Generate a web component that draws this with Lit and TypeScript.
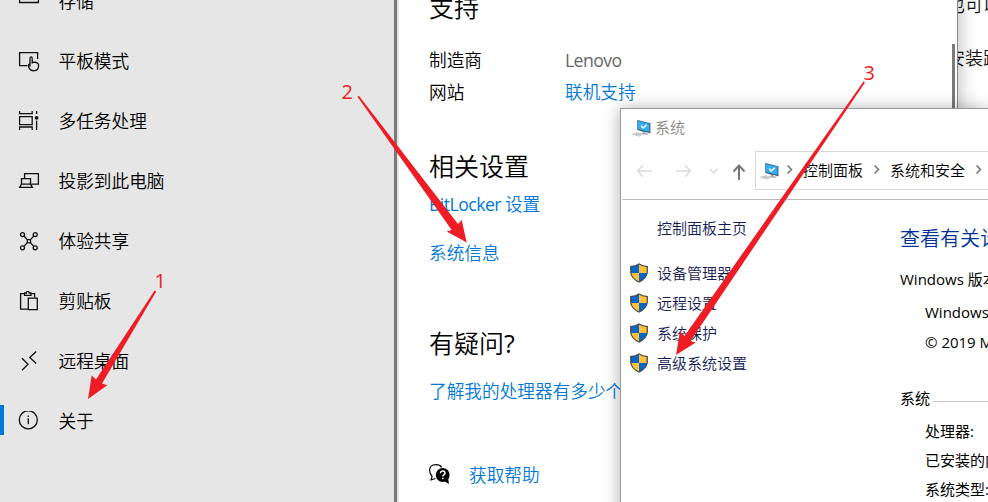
import { LitElement, html, css, svg } from "lit";
import { customElement } from "lit/decorators.js";

const line = (body: unknown) => html`<svg class="ico" width="22" height="22" viewBox="0 0 22 22" fill="none" stroke="#111" stroke-width="1.3">${body}</svg>`;

const icons = {
  storage: line(svg`<path d="M1.600 4.500h18.800v7H1.600zM14 8h2"/>`),
  tablet: line(svg`<path d="M9.500 14.600H1.600V1.600h18v6.500"/><path d="M12 15.500V7.400q0-1.500 1.100-1.500t1.100 1.500v5.100M14.200 11q3.200 0 5.500 1.200.9.600.9 2.600 0 5-4.800 5-3.700 0-5-3.200l-.3-2.600q.4-1.200 1.500-.6"/>`),
  tasks: line(svg`<path d="M1.600 0v2.700h12.600V0M1.600 5.600h12.600v8H1.600zM1.600 19v-3h12.600v3M18.600 0v3M18.600 9.500V19"/><circle cx="18.600" cy="6.800" r="1.900" fill="#111" stroke="none"/>`),
  project: line(svg`<path d="M6.600 7V2.600h13.800v10.500h-7M3.500 13.200V7.600h9v5.600M3.500 13.200l-1.900 3.200h12.800l-1.900-3.200z"/>`),
  share: line(svg`<circle cx="4.500" cy="3.600" r="2"/><circle cx="17.200" cy="3.600" r="2"/><circle cx="4.500" cy="16.800" r="2"/><circle cx="17.200" cy="16.800" r="2"/><path d="M6 5l3.200 3.600M15.800 5l-3.300 3.600M6 15.400l3.200-3.600M15.800 15.400l-3.300-3.600M9.300 8.600h3.200v3.200H9.300z"/>`),
  clip: line(svg`<path d="M10 18.200H2.600V2.600h3.900M13 2.600h3.600v4M6.600 4.300V2h1.800q.2-1.700 1.400-1.700T11.200 2H13v2.300z"/><path d="M10.300 7.200h9v11.400h-9z"/>`),
  remote: line(svg`<path d="M4 7.300l6 6-6 6M18.200.5l-6.400 6 6.400 6"/>`),
  about: line(svg`<circle cx="10.300" cy="8.900" r="9"/><path d="M10.300 7.300v6M10.300 4.400v1.500"/>`),
};

const pc = html`<svg class="pc" width="20" height="18" viewBox="0 0 20 18">
  <path d="M0 14l7-1.800 6.800 2-6 2.600z" fill="#d3d7db"/><path d="M2 14.500l5-1.300M4.500 15.300l5.500-1.500" stroke="#adb5bc" stroke-width=".7"/>
  <path d="M10.500 10.500l4 1.200v1.600l3.800.500-2.500 1.300-5.500-1.300 1.700-.8z" fill="#a3abb2"/>
  <path d="M6.300 0L19.400 3.200V13.300L6.300 9.900z" fill="#33566f"/><path d="M7 .9L18.400 3.800V12L7 9z" fill="#35aef5"/>
  <path d="M10.200 5.700l2 2.300 3.700-3.200" fill="none" stroke="#fff" stroke-width="1.500"/></svg>`;

const shield = html`<svg class="shield" width="18" height="20" viewBox="0 0 18 20">
  <path d="M9 .2Q5.500 2.700.1 2.900v6.700Q.7 15.800 9 19.800 17.300 15.800 17.900 9.600V2.900Q12.500 2.700 9 .2z" fill="#47494b"/>
  <path d="M9 1.600V10H1.400V4Q6 3.700 9 1.600z" fill="#0767c8"/><path d="M9 1.600V10h7.600V4Q12 3.700 9 1.600z" fill="#ffc038"/>
  <path d="M1.400 10H9v8.500Q2 15 1.400 10z" fill="#ffc038"/><path d="M16.600 10H9v8.500Q16 15 16.600 10z" fill="#0767c8"/></svg>`;

const chevron = html`<svg width="8" height="12" viewBox="0 0 8 12" fill="none" stroke="#777" stroke-width="1.600"><path d="M1.500 1.500l4 4-4 4"/></svg>`;

const font = css`
  :host { font-family: "Open Sans", "Noto Sans CJK SC", sans-serif; font-weight: 400; }
  * { box-sizing: border-box; }
  svg { display: block; flex: none; }
`;

@customElement("settings-nav")
class SettingsNav extends LitElement {
  static styles = [font, css`
    :host { display: block; background: #e6e6e6; overflow: hidden; font-weight: 350; }
    .list { display: flex; flex-direction: column; margin-top: -29px; }
    .item { height: 60px; display: flex; align-items: center; padding-left: 18px; gap: 18.500px; font-size: 17.670px; color: #000; white-space: nowrap; position: relative; }
    .item.active::before { content: ""; position: absolute; left: 0; top: 14px; width: 4px; height: 30px; background: #0078d7; }
    .ico { margin-top: 2px; }
    .label { padding-bottom: 2px; }
  `];
  render() {
    const items: [keyof typeof icons, string][] = [
      ["storage", "存储"], ["tablet", "平板模式"], ["tasks", "多任务处理"], ["project", "投影到此电脑"],
      ["share", "体验共享"], ["clip", "剪贴板"], ["remote", "远程桌面"], ["about", "关于"],
    ];
    return html`<div class="list">${items.map(([k, t]) => html`<div class="item ${k === "about" ? "active" : ""}">${icons[k]}<span class="label">${t}</span></div>`)}</div>`;
  }
}

@customElement("settings-page")
class SettingsPage extends LitElement {
  static styles = [font, css`
    :host { display: grid; grid-template-columns: 1fr 3px; background: #fff; overflow: hidden; padding-right: 2px; }
    .body { padding-left: 30px; font-size: 17.670px; font-weight: 350; white-space: nowrap; color: #000; }
    h2 { margin: 0; font-weight: 350; font-size: 25px; height: 36px; line-height: 36px; }
    .first { margin-top: -11px; }
    .facts { display: grid; grid-template-columns: 136px auto; grid-auto-rows: 32px; line-height: 32px; margin: 19px 0 40px; }
    .gray { color: #666; font-weight: 400; letter-spacing: -.6px; }
    .latin { font-weight: 400; letter-spacing: -.55px; }
    .mark { font-weight: 400; }
    .link { color: #0078d7; height: 24px; line-height: 24px; }
    .facts .link { height: 32px; line-height: 32px; }
    .bit { margin-top: 8px; }
    .info { margin-top: 25px; }
    .ask { margin-top: 60px; }
    .cpu { margin-top: 18px; }
    .help { display: flex; gap: 18px; align-items: center; margin-top: 60px; }
    .thumb { background: #7a7a7a; margin-top: 44px; }
  `];
  render() {
    return html`<div class="body">
      <h2 class="first">支持</h2>
      <div class="facts"><span>制造商</span><span class="gray">Lenovo</span><span>网站</span><span class="link">联机支持</span></div>
      <h2>相关设置</h2>
      <div class="link bit"><span class="latin">BitLocker </span>设置</div>
      <div class="link info">系统信息</div>
      <h2 class="ask">有疑问<span class="mark">?</span></h2>
      <div class="link cpu">了解我的处理器有多少个核</div>
      <div class="link help"><svg width="22" height="22" viewBox="0 0 22 22"><path d="M6.500 14.500L2 15.800l1.100-3.500Q.6 9.500.6 6.500.6.700 7 .7q4 0 5.700 2.600" fill="none" stroke="#000" stroke-width="1.200"/><circle cx="13.700" cy="11" r="6.900"/><path d="M15 17l5 3-.8-5z"/><path d="M11.500 9.300q.1-2.200 2.300-2.200t2.200 1.900q0 1.100-1.200 1.800-1 .6-1 1.600M13.800 13.700v1.500" fill="none" stroke="#fff" stroke-width="1.500"/></svg><span>获取帮助</span></div>
    </div><div class="thumb"></div>`;
  }
}

@customElement("system-window")
class SystemWindow extends LitElement {
  static styles = [font, css`
    :host { display: block; background: #fff; border: 1px solid #999; border-right: 0; box-shadow: 0 1px 16px rgba(0,0,0,.32); overflow: hidden; font-size: 15px; white-space: nowrap; color: #000; }
    .title { height: 38px; display: flex; align-items: center; gap: 4px; padding-left: 10px; color: #888; font-weight: 350; }
    .title span { padding-bottom: 3px; }
    .pc { margin-top: 2px; }
    .bar { height: 53px; margin-left: 1px; border-bottom: 1px solid #bbb; display: flex; align-items: flex-start; padding-top: 4px; font-weight: 350; }
    .tools { display: block; margin-right: 5px; }
    .addr { height: 39px; flex: 1; border: 1px solid #d9d9d9; border-right: 0; display: flex; align-items: center; padding-left: 3px; }
    .addr span { padding-bottom: 2px; }
    .addr .c1 { margin: 0 9px 0 7px; }
    .addr .c2 { margin: 0 9px 0 10px; }
    .main { display: grid; grid-template-columns: 279px 1fr; }
    .side { padding: 13px 0 0 8px; color: #151c55; font-weight: 350; }
    .home { height: 30px; line-height: 30px; padding-left: 28px; margin-bottom: 15px; }
    .task { height: 30px; display: flex; align-items: center; gap: 9px; padding-left: 1px; }
    .task span { padding-bottom: 2px; }
    .info { overflow: hidden; display: flex; flex-direction: column; }
    .info > div { height: 28px; line-height: 28px; }
    .info .head { color: #039; font-size: 20px; font-weight: 350; height: 36px; line-height: 36px; margin-top: 21px; }
    .info .ver { margin-top: 8px; }
    .in { padding-left: 25px; }
    .info .w { margin-top: 5px; }
    .info .c { margin-top: 2px; }
    .info .sys { margin-top: 28px; display: flex; gap: 3px; }
    .rule { flex: 1; border-bottom: 1px solid #c9c9c9; height: 18px; }
    .info .p { margin-top: 5px; }
    .info .r { margin-top: 1px; }
  `];
  render() {
    return html`
      <div class="title">${pc}<span>系统</span></div>
      <div class="bar">
        <svg class="tools" width="128" height="40" viewBox="0 0 128 40" fill="none" stroke="#dcdcdc" stroke-width="1.700">
          <path d="M30 20H15.500M21 14.500L15.500 20l5.500 5.500M54 20h14.500M63 14.500l5.500 5.500-5.500 5.500"/><path d="M88 18l3.700 3.700L95.400 18"/>
          <path d="M117 29V14.500M111.500 20.500l5.500-6 5.500 6" stroke="#777" stroke-width="2"/></svg>
        <div class="addr">${pc}<span class="c1">${chevron}</span><span>控制面板</span><span class="c2">${chevron}</span><span>系统和安全</span><span class="c2">${chevron}</span></div>
      </div>
      <div class="main">
        <div class="side"><div class="home">控制面板主页</div>
          ${["设备管理器", "远程设置", "系统保护", "高级系统设置"].map((t) => html`<div class="task">${shield}<span>${t}</span></div>`)}</div>
        <div class="info">
          <div class="head">查看有关计算机的基本信息</div>
          <div class="ver">Windows 版本</div>
          <div class="in w">Windows 10</div>
          <div class="in c">© 2019 Microsoft</div>
          <div class="sys"><span>系统</span><span class="rule"></span></div>
          <div class="in p">处理器:</div>
          <div class="in r">已安装的内存</div>
          <div class="in r">系统类型:</div>
        </div>
      </div>`;
  }
}

@customElement("app-root")
class AppRoot extends LitElement {
  static styles = [font, css`
    :host { display: grid; grid-template-columns: 394px 3px 2px 558px 1fr; width: 988px; height: 502px; position: relative; overflow: hidden; background: #fff; }
    .scroll { background: #7a7a7a; }
    .gap { background: #e6e6e6; }
    .doc { border-left: 1px solid #888; overflow: hidden; background: linear-gradient(90deg, #dadada, #f5f5f5 10px, #fff 20px); font-size: 18px; font-weight: 350; color: #111; white-space: nowrap; }
    .doc div { height: 53px; line-height: 26px; margin-left: -11px; }
    .doc div:first-child { margin-top: -8px; }
    system-window { position: absolute; left: 620px; top: 108px; right: 0; height: 420px; }
    .marks { position: absolute; left: 0; top: 0; fill: #ee1c24; font-size: 20px; }
  `];
  render() {
    return html`<settings-nav></settings-nav><div class="scroll"></div><div class="gap"></div><settings-page></settings-page>
      <div class="doc"><div>也可以</div><div>安装路径</div></div>
      <system-window></system-window>
      <svg class="marks" width="988" height="502" viewBox="0 0 988 502">
        <path d="M154.600 290.500l1.600 1L102 383.500l5.300 1.700L88 399l3.700-23.500 4.300 4z"/>
        <path d="M357.500 96.700l1.400-1L458 224l3.700-4 5 22.400-20-10.800 5-1.600z"/>
        <path d="M863.500 81.500l1.500 1L690.500 341l5.200 1.600L676 355l4-23.500 4.500 4.500z"/>
        <text x="154.500" y="288">1</text><text x="341.500" y="99">2</text><text x="863.500" y="80">3</text>
      </svg>`;
  }
}
